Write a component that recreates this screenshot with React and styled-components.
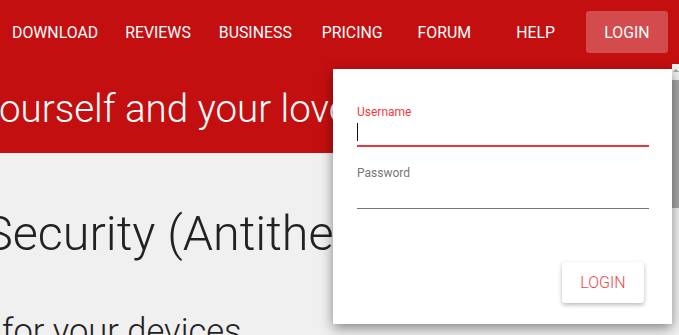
import React from "react";
import styled, { createGlobalStyle } from "styled-components";

const Global = createGlobalStyle`
  html, body { margin: 0; padding: 0; }
  body { font-family: Roboto, "Liberation Sans", sans-serif; overflow: hidden; }
  * { box-sizing: border-box; }
`;

const RED = "#c40f10";

const Page = styled.div`
  position: relative;
  width: 679px;
  height: 335px;
  overflow: hidden;
  display: flex;
  flex-direction: column;
`;

const NavBar = styled.nav`
  height: 64px;
  flex: none;
  background: ${RED};
  display: flex;
  align-items: center;
`;

const NavLink = styled.a`
  margin-left: ${(p) => p.$ml}px;
  margin-top: 1px;
  color: #fff;
  font-size: 15.85px;
  font-weight: 400;
  line-height: 20px;
  text-decoration: none;
  white-space: nowrap;
`;

const NavButton = styled.a`
  margin-left: ${(p) => p.$ml}px;
  width: 82px;
  height: 42px;
  border-radius: 3px;
  background: rgba(255, 255, 255, 0.25);
  color: #fff;
  font-size: 15.85px;
  display: flex;
  align-items: center;
  justify-content: center;
  text-decoration: none;
`;

const Body = styled.div`
  flex: 1;
  display: flex;
  min-height: 0;
`;

const Content = styled.main`
  flex: 1;
  overflow: hidden;
  display: flex;
  flex-direction: column;
`;

const Hero = styled.section`
  background: ${RED};
  height: 89px;
  flex: none;
  padding-top: 23px;
  overflow: hidden;
`;

const HeroTitle = styled.h1`
  margin: 0 0 0 ${(p) => p.$shift}px;
  color: #fff;
  font-size: 38.5px;
  font-weight: 300;
  line-height: 44px;
  white-space: nowrap;
`;

const Section = styled.section`
  flex: 1;
  background: #f0f0f0;
  padding-top: 53px;
  overflow: hidden;
`;

const SectionTitle = styled.h2`
  margin: 0 0 0 ${(p) => p.$shift}px;
  color: #222;
  font-size: 48.5px;
  font-weight: 300;
  line-height: 56px;
  white-space: nowrap;
`;

const SubTitle = styled.h3`
  margin: 49px 0 0 ${(p) => p.$shift}px;
  color: #222;
  font-size: 34.5px;
  font-weight: 300;
  line-height: 40px;
  white-space: nowrap;
`;

const Scrollbar = styled.div`
  width: 7px;
  flex: none;
  background: #f1f1f1;
  display: flex;
  flex-direction: column;
`;

const ScrollArrow = styled.div`
  height: 16px;
  display: flex;
  justify-content: center;
  padding-top: 5px;
  &::before {
    content: "";
    border-left: 3px solid transparent;
    border-right: 3px solid transparent;
    border-bottom: 3px solid #a3a3a3;
    height: 0;
  }
`;

const ScrollThumb = styled.div`
  height: 128px;
  background: #a8a8a8;
`;

const Popup = styled.div`
  position: absolute;
  top: 69px;
  left: 333px;
  width: 339px;
  height: 255px;
  background: #fff;
  box-shadow: 0 4px 12px rgba(0, 0, 0, 0.45);
  padding: 36px 23px 0 24px;
  display: flex;
  flex-direction: column;
  z-index: 2;
`;

const Field = styled.label`
  display: flex;
  flex-direction: column;
  margin-top: ${(p) => p.$mt || 0}px;
`;

const FieldLabel = styled.span`
  font-size: 12px;
  line-height: 14px;
  color: ${(p) => (p.$active ? "#f23a3f" : "#777")};
`;

const InputRow = styled.div`
  display: flex;
  align-items: center;
  height: ${(p) => p.$h}px;
  border-bottom: ${(p) => (p.$active ? "2px solid #f0333a" : "1px solid #777")};
`;

const Caret = styled.span`
  width: 1px;
  height: 18px;
  background: #111;
  flex: none;
`;

const Input = styled.input`
  flex: 1;
  border: 0;
  outline: 0;
  background: transparent;
  font-family: Roboto, sans-serif;
  font-size: 16px;
  padding: 0;
  caret-color: transparent;
`;

const Actions = styled.div`
  display: flex;
  justify-content: flex-end;
  margin-top: 53px;
  padding-right: 5px;
`;

const SubmitButton = styled.button`
  width: 82px;
  height: 41px;
  border: 0;
  border-radius: 3px;
  background: #fff;
  box-shadow: 0 2px 4px rgba(0, 0, 0, 0.28);
  color: #f0454a;
  font-family: Roboto, sans-serif;
  font-size: 16px;
  font-weight: 300;
  cursor: pointer;
`;

const navItems = [
  { label: "DOWNLOAD", ml: 12 },
  { label: "REVIEWS", ml: 27 },
  { label: "BUSINESS", ml: 28 },
  { label: "PRICING", ml: 30 },
  { label: "FORUM", ml: 35 },
  { label: "HELP", ml: 45 },
];

export default function App() {
  return (
    <Page>
      <Global />
      <NavBar>
        {navItems.map((n) => (
          <NavLink key={n.label} href="#" $ml={n.ml}>
            {n.label}
          </NavLink>
        ))}
        <NavButton href="#" $ml={31}>LOGIN</NavButton>
      </NavBar>
      <Body>
        <Content>
          <Hero>
            <HeroTitle $shift={-1}>ourself and your loved ones</HeroTitle>
          </Hero>
          <Section>
            <SectionTitle $shift={-16}>Security (Antitheft)</SectionTitle>
            <SubTitle $shift={2}>for your devices</SubTitle>
          </Section>
        </Content>
        <Scrollbar>
          <ScrollArrow />
          <ScrollThumb />
        </Scrollbar>
      </Body>
      <Popup>
        <Field>
          <FieldLabel $active>Username</FieldLabel>
          <InputRow $active $h={28}>
            <Caret />
            <Input type="text" />
          </InputRow>
        </Field>
        <Field $mt={19}>
          <FieldLabel>Password</FieldLabel>
          <InputRow $h={29}>
            <Input type="password" />
          </InputRow>
        </Field>
        <Actions>
          <SubmitButton>LOGIN</SubmitButton>
        </Actions>
      </Popup>
    </Page>
  );
}
